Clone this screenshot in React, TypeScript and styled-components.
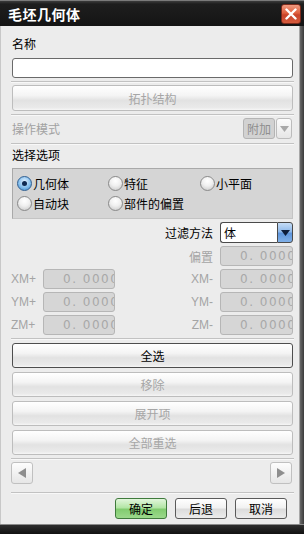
import React from 'react';
import styled, { createGlobalStyle, css } from 'styled-components';

const GlobalStyle = createGlobalStyle`
  html, body {
    margin: 0;
    padding: 0;
    background: #ececec;
  }
  body {
    font-family: "Noto Sans CJK SC", "Liberation Sans", sans-serif;
    font-size: 12px;
    color: #000;
  }
`;

const cjk = `"Noto Sans CJK SC", "Liberation Sans", sans-serif`;

const Window = styled.div`
  width: 304px;
  height: 534px;
  display: flex;
  flex-direction: column;
  overflow: hidden;
  background: #ececec;
`;

const TitleBar = styled.div`
  height: 26px;
  flex: none;
  box-sizing: border-box;
  display: flex;
  align-items: center;
  justify-content: space-between;
  padding: 0 3px 0 8px;
  border-top: 1px solid #7a7a7a;
  background: linear-gradient(#3c3c3c 0, #1e1e1e 3px, #141414 100%);
`;

const Title = styled.div`
  color: #fff;
  font-family: ${cjk};
  font-weight: bold;
  font-size: 14px;
  letter-spacing: 0.5px;
`;

const CloseButton = styled.button`
  width: 20px;
  height: 20px;
  margin: 0;
  padding: 0;
  box-sizing: border-box;
  display: flex;
  align-items: center;
  justify-content: center;
  border: 1px solid #7c2a1c;
  border-radius: 3px;
  background: linear-gradient(#f09a80 0%, #e0603f 45%, #c8432a 55%, #d45a3c 100%);
`;

const Middle = styled.div`
  flex: 1;
  display: flex;
  min-height: 0;
`;

const Panel = styled.div`
  flex: 1;
  display: flex;
  flex-direction: column;
  box-sizing: border-box;
  padding: 0 6px 0 11px;
  border-left: 1px solid #c8c8c8;
  border-right: 1px solid #a8a8a8;
  background: #ececec;
`;

const RightFrame = styled.div`
  width: 4px;
  flex: none;
  background: linear-gradient(90deg, #6a6a6a, #3a3a3a);
`;

const BottomFrame = styled.div`
  height: 9px;
  flex: none;
  border-top: 1px solid #8a8a8a;
  background: linear-gradient(#2e2e2e, #111);
`;

const Label = styled.div<{ $top: number; $muted?: boolean }>`
  margin-top: ${(p) => p.$top}px;
  height: 16px;
  line-height: 16px;
  color: ${(p) => (p.$muted ? '#a2a2a2' : '#000')};
  white-space: nowrap;
`;

const Separator = styled.div<{ $top: number }>`
  margin: ${(p) => p.$top}px -1px 0 -1px;
  height: 1px;
  flex: none;
  background: #c2c2c2;
  box-shadow: 0 1px 0 #f8f8f8;
`;

const NameInput = styled.input`
  margin-top: 6px;
  height: 20px;
  box-sizing: border-box;
  width: 100%;
  border: 1px solid #6a6a6a;
  border-radius: 3px;
  background: #fff;
  outline: none;
  font: inherit;
`;

const buttonFace = css`
  background: linear-gradient(#ffffff 0%, #f4f4f4 40%, #e2e2e2 60%, #eaeaea 90%, #f6f6f6 100%);
`;

const PushButton = styled.button<{ $top: number; $default?: boolean }>`
  display: block;
  width: 100%;
  height: 25px;
  margin: ${(p) => p.$top}px 0 0 0;
  padding: 0;
  box-sizing: border-box;
  border: 1px solid ${(p) => (p.$default ? '#4e4e4e' : '#bdbdbd')};
  border-radius: 3px;
  ${buttonFace}
  color: #000;
  font-family: ${cjk};
  font-size: 12px;
  &:disabled {
    color: #a6a6a6;
  }
`;

const Row = styled.div<{ $top: number; $justify?: string; $height: number }>`
  margin-top: ${(p) => p.$top}px;
  height: ${(p) => p.$height}px;
  display: flex;
  align-items: center;
  justify-content: ${(p) => p.$justify || 'flex-start'};
  gap: 7px;
`;

const Combo = styled.div`
  display: flex;
  gap: 1px;
  height: 21px;
`;

const ComboText = styled.div<{ $disabled?: boolean; $width: number }>`
  width: ${(p) => p.$width}px;
  box-sizing: border-box;
  height: 100%;
  padding-left: 3px;
  line-height: 19px;
  border: 1px solid ${(p) => (p.$disabled ? '#b4b4b4' : '#4a4a4a')};
  border-right: ${(p) => (p.$disabled ? '' : 'none')};
  border-radius: ${(p) => (p.$disabled ? '3px' : '3px 0 0 3px')};
  background: ${(p) => (p.$disabled ? '#d2d2d2' : '#fff')};
  color: ${(p) => (p.$disabled ? '#8e8e8e' : '#000')};
`;

const ComboArrow = styled.div<{ $disabled?: boolean }>`
  width: 16px;
  box-sizing: border-box;
  height: 100%;
  display: flex;
  align-items: center;
  justify-content: center;
  border: 1px solid ${(p) => (p.$disabled ? '#bcbcbc' : '#4a4a4a')};
  border-radius: ${(p) => (p.$disabled ? '3px' : '0 3px 3px 0')};
  margin-left: ${(p) => (p.$disabled ? '0' : '-1px')};
  background: ${(p) =>
    p.$disabled
      ? 'linear-gradient(#fbfbfb, #e6e6e6)'
      : 'linear-gradient(#c6ddf6 0%, #8fb9ea 45%, #5e95dc 55%, #80b0e8 100%)'};
`;

const GroupBox = styled.div`
  margin-top: 5px;
  height: 51px;
  box-sizing: border-box;
  border: 1px solid #a9a9a9;
  border-right-color: #c4c4c4;
  border-bottom-color: #c4c4c4;
  background: #d5d5d5;
  padding: 6px 0 0 4px;
  display: grid;
  grid-template-columns: 91px 92px 1fr;
  grid-auto-rows: 16px;
  row-gap: 4px;
`;

const RadioLabel = styled.label`
  display: flex;
  align-items: center;
  gap: 1px;
  white-space: nowrap;
`;

const RadioDot = styled.span<{ $checked?: boolean }>`
  width: 15px;
  height: 15px;
  flex: none;
  box-sizing: border-box;
  border-radius: 50%;
  border: 1px solid ${(p) => (p.$checked ? '#2f5f92' : '#8a8a8a')};
  display: flex;
  align-items: center;
  justify-content: center;
  background: ${(p) =>
    p.$checked
      ? 'radial-gradient(circle at 50% 35%, #e4f2ff 0%, #86c0ee 55%, #3b87c8 100%)'
      : 'radial-gradient(circle at 50% 30%, #ffffff 0%, #f0f0f0 45%, #c4c4c4 100%)'};
  &::after {
    content: '';
    display: ${(p) => (p.$checked ? 'block' : 'none')};
    width: 5px;
    height: 5px;
    border-radius: 50%;
    background: #0e2a52;
  }
`;

const CoordGrid = styled.div`
  margin-top: 3px;
  display: grid;
  grid-template-columns: 31px 72px 1fr 73px;
  grid-auto-rows: 20px;
  row-gap: 3px;
  align-items: center;
`;

const CoordLabel = styled.div<{ $right?: boolean }>`
  color: #a4a4a4;
  font-family: "Liberation Sans", sans-serif;
  font-size: 12px;
  justify-self: ${(p) => (p.$right ? 'end' : 'start')};
  padding-right: ${(p) => (p.$right ? '7px' : '0')};
  margin-left: ${(p) => (p.$right ? '0' : '-1px')};
  font-family: ${(p) => (p.$right ? `"Liberation Sans", ${cjk}` : `"Liberation Sans", sans-serif`)};
`;

const NumberBox = styled.input`
  width: 100%;
  height: 20px;
  box-sizing: border-box;
  margin: 0;
  border: 1px solid #b6b6b6;
  border-radius: 3px;
  background: #d6d6d6;
  padding: 0 0 0 19px;
  font-family: "DejaVu Sans", sans-serif;
  font-size: 12px;
  letter-spacing: 1.5px;
  color: #a8a8a8;
  outline: none;
  &:disabled {
    color: #a8a8a8;
    background: #d6d6d6;
  }
`;

const ScrollRow = styled.div`
  margin-top: 3px;
  height: 22px;
  display: flex;
  justify-content: space-between;
  padding-right: 1px;
`;

const ScrollButton = styled.button`
  width: 22px;
  height: 22px;
  margin: 0 0 0 -1px;
  padding: 0;
  box-sizing: border-box;
  display: flex;
  align-items: center;
  justify-content: center;
  border: 1px solid #c0c0c0;
  border-radius: 3px;
  background: linear-gradient(#fdfdfd, #e6e6e6);
`;

const ActionBar = styled.div`
  margin-top: 5px;
  height: 21px;
  display: flex;
  justify-content: flex-end;
  gap: 8px;
  padding-right: 6px;
`;

const DialogButton = styled.button<{ $primary?: boolean }>`
  width: 52px;
  height: 21px;
  margin: 0;
  padding: 0;
  box-sizing: border-box;
  border-radius: 3px;
  font-family: ${cjk};
  font-size: 12px;
  color: #000;
  border: 1px solid ${(p) => (p.$primary ? '#3f7a3c' : '#5a5a5a')};
  background: ${(p) =>
    p.$primary
      ? 'linear-gradient(#e2f6dc 0%, #b4e6a6 45%, #82cc70 55%, #9cd98c 100%)'
      : 'linear-gradient(#ffffff 0%, #f2f2f2 45%, #dcdcdc 55%, #ececec 100%)'};
`;

function Triangle({ dir, color, w = 8, h = 10 }: { dir: 'left' | 'right' | 'down'; color: string; w?: number; h?: number }) {
  const pts =
    dir === 'left'
      ? `${w},0 ${w},${h} 0,${h / 2}`
      : dir === 'right'
      ? `0,0 0,${h} ${w},${h / 2}`
      : `0,0 ${w},0 ${w / 2},${h}`;
  return (
    <svg width={w} height={h} viewBox={`0 0 ${w} ${h}`}>
      <polygon points={pts} fill={color} />
    </svg>
  );
}

const coords = [
  ['XM+', 'XM-'],
  ['YM+', 'YM-'],
  ['ZM+', 'ZM-'],
];

export default function App() {
  return (
    <Window>
      <GlobalStyle />
      <TitleBar>
        <Title>毛坯几何体</Title>
        <CloseButton>
          <svg width="12" height="12" viewBox="0 0 12 12">
            <path d="M1.5 1.5 L10.5 10.5 M10.5 1.5 L1.5 10.5" stroke="#fff" strokeWidth="2.4" strokeLinecap="round" />
          </svg>
        </CloseButton>
      </TitleBar>
      <Middle>
        <Panel>
          <Label $top={10}>名称</Label>
          <NameInput defaultValue="" />
          <Separator $top={3} />
          <PushButton $top={3} disabled style={{ height: 26 }}>
            拓扑结构
          </PushButton>
          <Separator $top={3} />
          <Row $top={3} $height={21} $justify="space-between">
            <Label $top={0} $muted>
              操作模式
            </Label>
            <Combo style={{ marginRight: 1 }}>
              <ComboText $disabled $width={32}>
                附加
              </ComboText>
              <ComboArrow $disabled>
                <Triangle dir="down" color="#a8a8a8" w={9} h={6} />
              </ComboArrow>
            </Combo>
          </Row>
          <Separator $top={4} />
          <Label $top={3}>选择选项</Label>
          <GroupBox>
            <RadioLabel>
              <RadioDot $checked />
              几何体
            </RadioLabel>
            <RadioLabel>
              <RadioDot />
              特征
            </RadioLabel>
            <RadioLabel>
              <RadioDot />
              小平面
            </RadioLabel>
            <RadioLabel>
              <RadioDot />
              自动块
            </RadioLabel>
            <RadioLabel>
              <RadioDot />
              部件的偏置
            </RadioLabel>
          </GroupBox>
          <Row $top={3} $height={21} $justify="flex-end">
            <Label $top={0}>过滤方法</Label>
            <Combo>
              <ComboText $width={57}>体</ComboText>
              <ComboArrow>
                <Triangle dir="down" color="#0c1c3a" w={9} h={6} />
              </ComboArrow>
            </Combo>
          </Row>
          <CoordGrid>
            <span />
            <span />
            <CoordLabel $right>偏置</CoordLabel>
            <NumberBox disabled defaultValue="0. 00000" />
            {coords.map(([a, b]) => (
              <React.Fragment key={a}>
                <CoordLabel>{a}</CoordLabel>
                <NumberBox disabled defaultValue="0. 00000" />
                <CoordLabel $right>{b}</CoordLabel>
                <NumberBox disabled defaultValue="0. 00000" />
              </React.Fragment>
            ))}
          </CoordGrid>
          <Separator $top={3} />
          <PushButton $top={4} $default>
            全选
          </PushButton>
          <PushButton $top={4} disabled>
            移除
          </PushButton>
          <PushButton $top={4} disabled>
            展开项
          </PushButton>
          <PushButton $top={4} disabled>
            全部重选
          </PushButton>
          <Separator $top={3} />
          <ScrollRow>
            <ScrollButton>
              <Triangle dir="left" color="#8e8e8e" w={8} h={10} />
            </ScrollButton>
            <ScrollButton>
              <Triangle dir="right" color="#8e8e8e" w={8} h={10} />
            </ScrollButton>
          </ScrollRow>
          <Separator $top={8} />
          <ActionBar>
            <DialogButton $primary>确定</DialogButton>
            <DialogButton>后退</DialogButton>
            <DialogButton>取消</DialogButton>
          </ActionBar>
        </Panel>
        <RightFrame />
      </Middle>
      <BottomFrame />
    </Window>
  );
}
